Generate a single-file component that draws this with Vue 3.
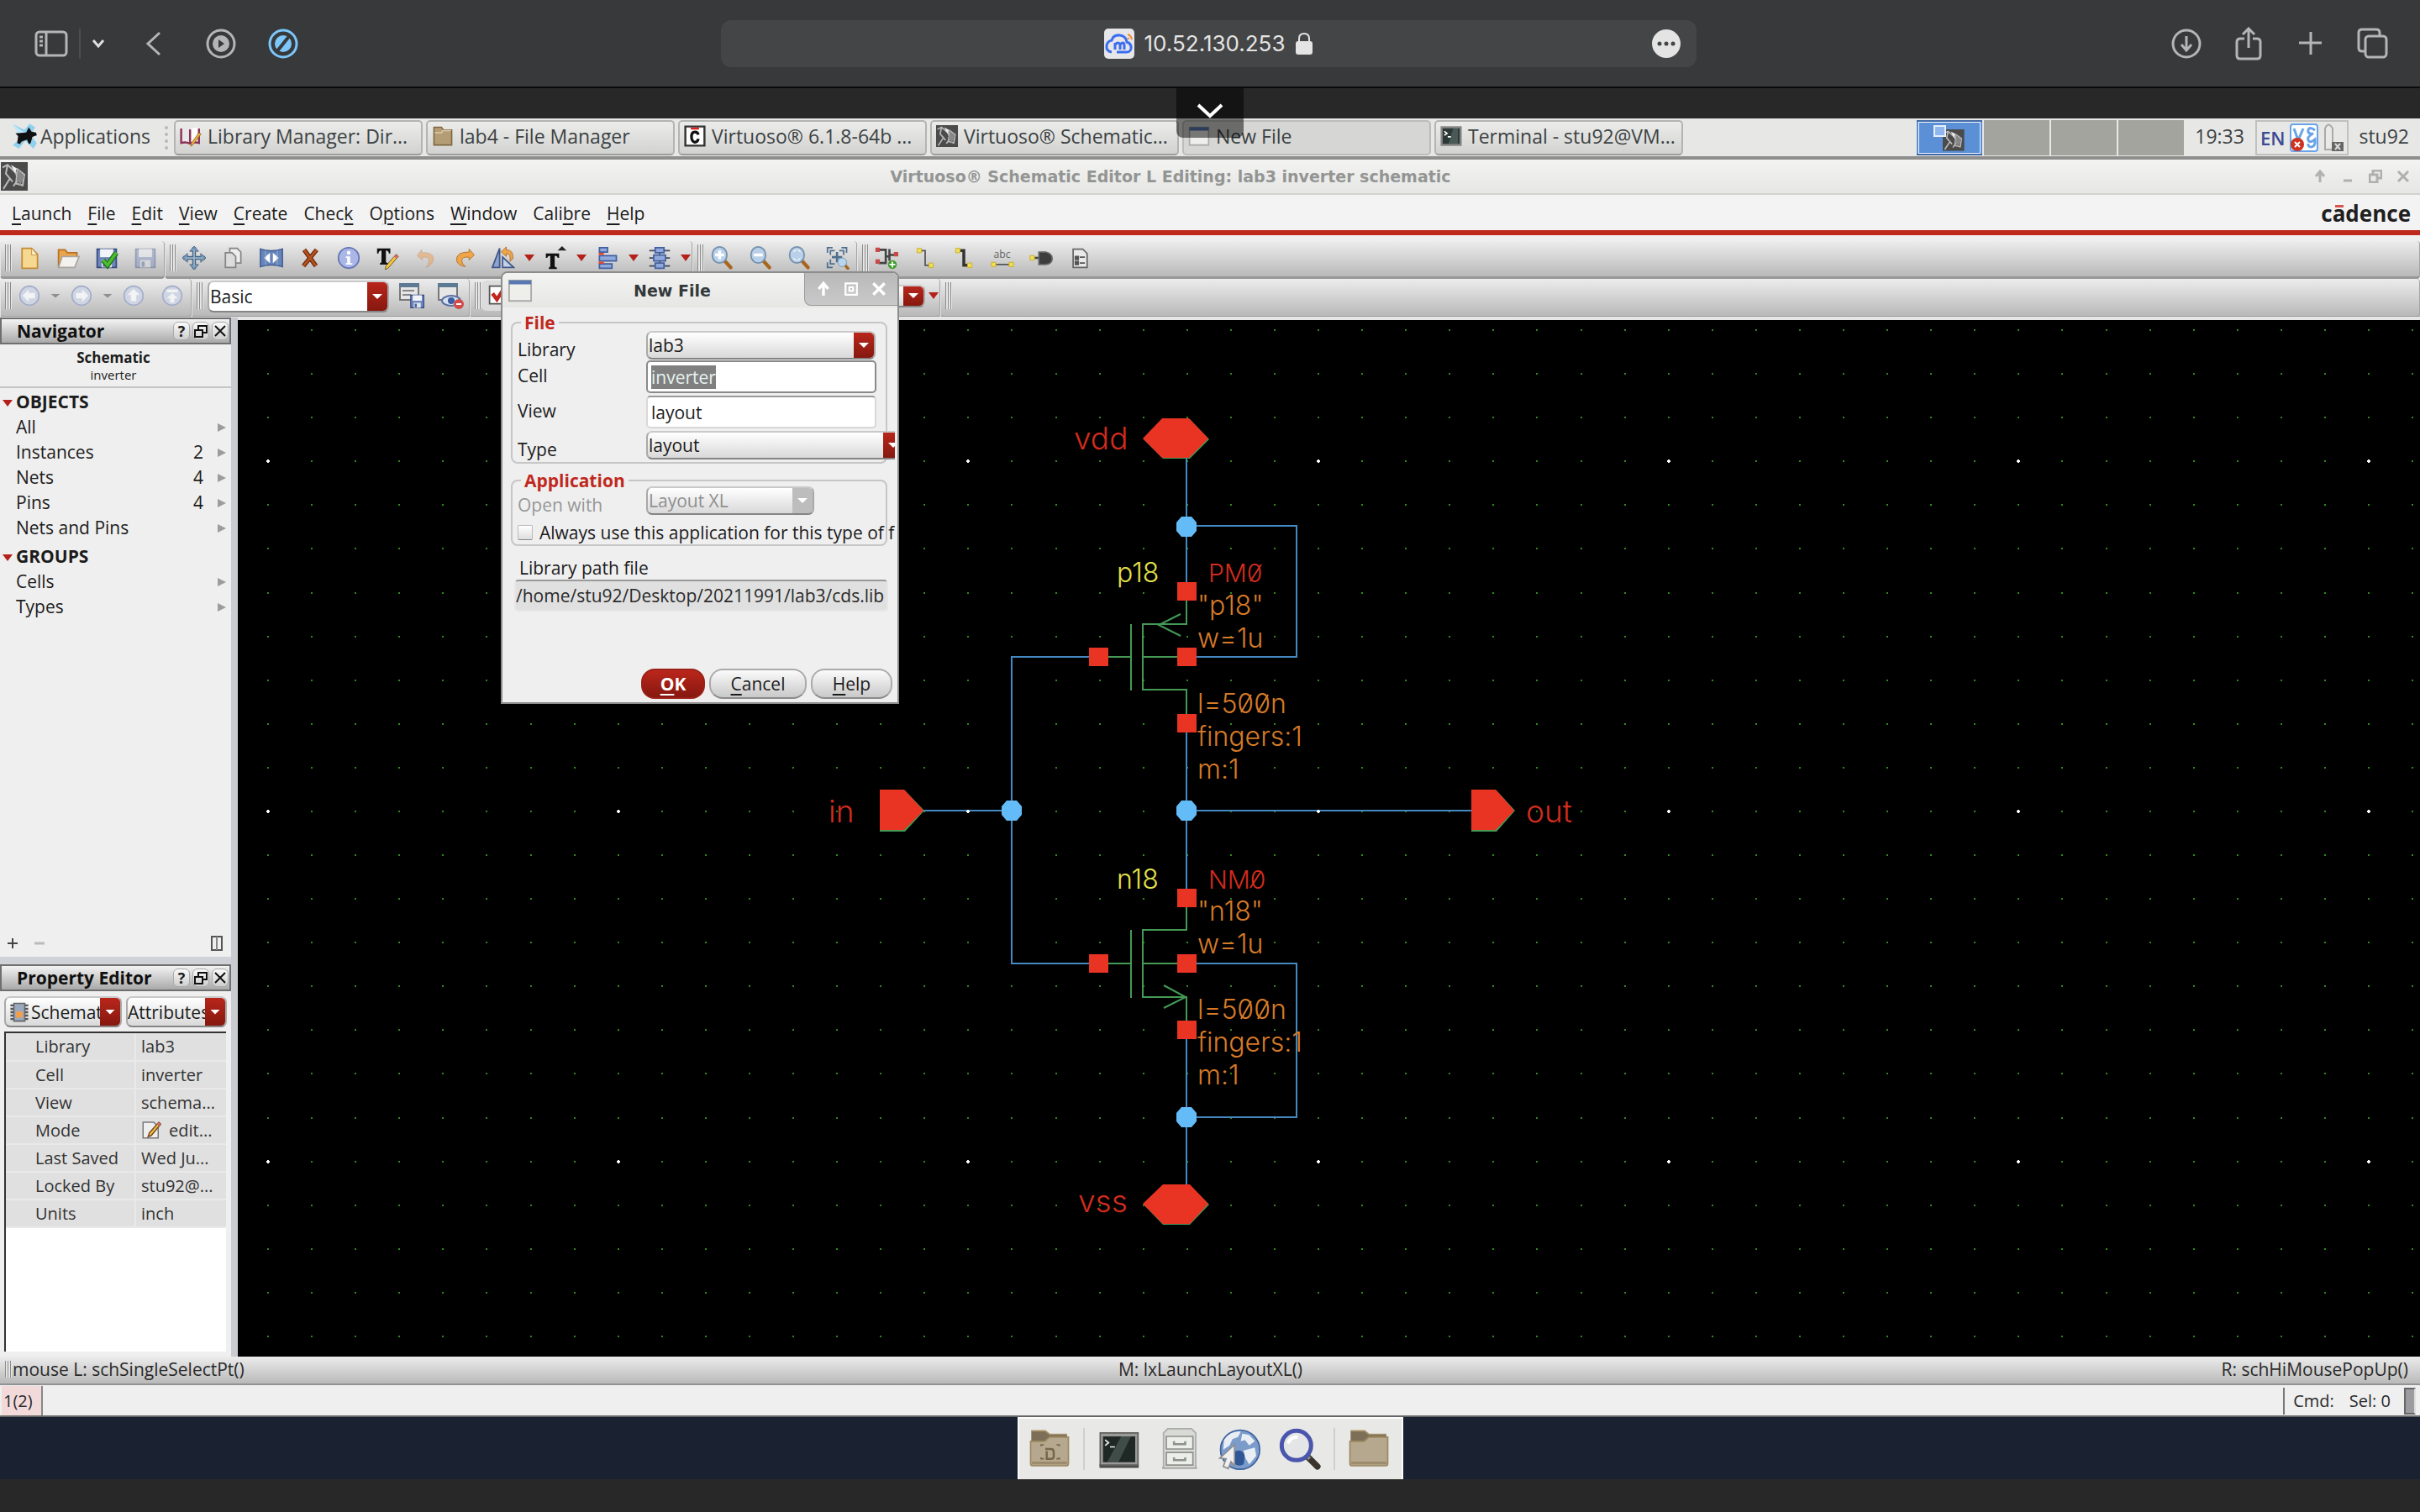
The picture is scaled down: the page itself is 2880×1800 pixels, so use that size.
<script setup>
import { onMounted, ref } from 'vue'

const cellInput = ref(null)
onMounted(() => {
  cellInput.value.focus()
  cellInput.value.select()
})

const fade = 'opacity="0.4"'
const disk = '<path d="M3 4h26v25H3z" fill="#6f86bd" stroke="#35497d" stroke-width="2"/><path d="M7 4h18v11H7z" fill="#f2f4fa"/><path d="M9 19h14v10H9z" fill="#dfe3ec"/><path d="M11 21h4v7h-4z" fill="#4a5f96"/>'
const lens = '<path d="M19 19l9 10" stroke="#a8651c" stroke-width="5" stroke-linecap="round"/><ellipse cx="13" cy="12" rx="10" ry="11" fill="#b9d0e8" stroke="#7390ad" stroke-width="2"/>'
const ring = '<circle cx="16" cy="16" r="14" fill="#cfd5e2" stroke="#a3adc8" stroke-width="2"/>'
const chip = '<path d="M0 0h32v32H0z" fill="#4b4b4b"/><path d="M2 6l6-3 10 9 2 8-5 7M8 3l-2 10 8 9M20 8l8 6-2 12-8-2zM3 30l8-12" stroke="#bbb" stroke-width="2" fill="none"/><path d="M20 8l8 8-5 10-4-6z" fill="#888"/><path d="M12 3l7 4-2 6z" fill="#eee"/>'
const windowPane = '<path d="M2 3h28v26H2z" fill="#eeeeea" stroke="#a9a9a5" stroke-width="2"/><path d="M2 3h28v5H2z" fill="#5878b4"/>'
const folder = '<path d="M4 4h20l6 5h25v20H4z" fill="#7d6f57"/><path d="M4 4h20l6 5h25" stroke="#a8926b" stroke-width="2" fill="none"/><path d="M3 19h20l7-6h27v38q0 3-3 3H6q-3 0-3-3z" fill="#b6a88e" stroke="#9c8860" stroke-width="2"/><path d="M5 48h50v4H5z" fill="#9c8b6d"/>'
const toolWindow = '<path d="M2 2h22v19H2z" fill="#e6e6e6" stroke="#777" stroke-width="2"/><path d="M1 1h24v5H1z" fill="#5c7a94"/>'

const icons = {
  book: '<path d="M2 5q7-3 13 1v21q-6-3-13-1z" fill="#e8e8e8"/><path d="M15 6q7-4 13-1v21q-7-2-13 1z" fill="#fff"/><path d="M2 5v21q7-2 13 1 6-3 13-1V5M15 6v20" fill="none" stroke="#8a3158" stroke-width="3"/><path d="M31 13L19 29l-3 2 1-5 11-15z" fill="#e9b13b" stroke="#94601c"/>',
  smallFolder: '<path d="M3 7V3h11l3 4h12v22H3z" fill="#b49c74" stroke="#7f6840" stroke-width="2"/><path d="M4 11h10l2-3h12" stroke="#dccbab" stroke-width="2" fill="none"/>',
  cad: '<path d="M2 2h28v28H2z" fill="#fff" stroke="#333" stroke-width="3"/><path d="M10 5h12" stroke="#e2231a" stroke-width="3"/><path d="M21 14q-1-4-5-4-5 0-5 7t5 8q4 0 5-5" fill="none" stroke="#111" stroke-width="4"/>',
  chip,
  window: windowPane,
  terminal: '<path d="M2 3h28v26H2z" fill="#2c3835" stroke="#888" stroke-width="3"/><path d="M6 9l4 3-4 3M11 17h5" stroke="#fff" stroke-width="2" fill="none"/><path d="M19 5l-7 22h14V5z" fill="#5d706b" opacity=".6"/>',
  mouse: '<path d="M4 3l11 12L3 26l7 4 7-9 9 9 4-6-7-9 5-9-6-4-6 7z" fill="#8fd0ee"/><path d="M2 2l14 10-6 3z" fill="#c3e8f8"/><path d="M6 13l12-1 3-6 3 5 5 1 1 3-5 2-2 7-2 1-2-5-6 2-2 3-3-1 1-8z" fill="#111"/>',
  newDoc: '<path d="M6 3h13l8 8v19H6z" fill="#f6d991" stroke="#c48a35" stroke-width="2"/><path d="M19 3v9h8z" fill="#fff3cf" stroke="#c48a35"/>',
  open: '<path d="M3 28V5h9l3 4h13v10" fill="#eaa44c" stroke="#b97223" stroke-width="2"/><path d="M8 14h23l-6 15H3z" fill="#f4f2ef" stroke="#a9a5a0" stroke-width="2"/>',
  saveCheck: disk + '<path d="M11 19l6 7L29 9" stroke="#1d7013" stroke-width="7" fill="none"/><path d="M11 19l6 7L29 9" stroke="#4dbc35" stroke-width="4" fill="none"/>',
  save: '<g ' + fade + '>' + disk + '</g>',
  move: '<path d="M16 1v30M1 16h30" stroke="#466481" stroke-width="5"/><path d="M16 0l6 7H10zM16 32l6-7H10zM0 16l7-6v12zM32 16l-7-6v12z" fill="#7998b8" stroke="#466481"/><path d="M16 5v22M5 16h22" stroke="#9ab6d0" stroke-width="2"/>',
  copy: '<path d="M12 3h10l5 5v15H12z" fill="#eee" stroke="#858585" stroke-width="2"/><path d="M6 9h9l5 5v15H6z" fill="#dcdcdc" stroke="#858585" stroke-width="2"/>',
  stretch: '<path d="M1 4q15 5 30 0v24q-15-5-30 0z" fill="#6685bb" stroke="#4a6598" stroke-width="2"/><path d="M14 9v14l-8-7zM18 9v14l8-7z" fill="#fff"/><path d="M8 6v20M24 6v20" stroke="#9db3d8"/>',
  remove: '<path d="M8 5l16 22M25 5L7 27" stroke="#69290c" stroke-width="6"/><path d="M8 5l16 22M25 5L7 27" stroke="#b8531f" stroke-width="3"/>',
  info: '<circle cx="16" cy="16" r="14" fill="#a9b6e6" stroke="#6575b4" stroke-width="2"/><circle cx="16" cy="9" r="2.500" fill="#fff"/><path d="M12 14h6v9h3v2h-9v-2h2v-7h-2z" fill="#fff"/>',
  textEdit: '<path d="M2 3h18v7h-2q0-4-4-4v15q0 2 3 2v2H6v-2q2 0 2-2V6Q4 6 4 10H2z" fill="#111"/><path d="M28 11l3 3-14 16-4 2 1-5z" fill="#f2c63f" stroke="#6b4a18"/><path d="M28 11l3 3-3 3-3-3z" fill="#d46b6b"/>',
  undo: '<path d="M10 5l-6 8 7 6v-4q9-1 9 5 0 5-4 9 10-4 10-12 0-9-16-8z" fill="#e8a86a" stroke="#c98f5e" opacity=".6"/>',
  redo: '<path d="M22 4l7 8-7 7v-4q-10-1-10 5 0 4 5 8Q5 26 5 18 5 8 22 8z" fill="#efa548" stroke="#ad6d25"/>',
  rotate: '<path d="M11 3v26H1z" fill="#8fa5d1" stroke="#3f5688" stroke-width="2"/><path d="M15 15v14h15z" fill="#c4d0e8" stroke="#3f5688" stroke-width="2"/><path d="M13 8l7-7v4q10 0 9 12l-4 4q2-11-5-11v4z" fill="#efa548" stroke="#ad6d25"/>',
  textUp: '<path d="M3 10h18v6h-2q0-3-4-3v14q0 2 3 2v2H7v-2q2 0 2-2V13q-4 0-4 3H3z" fill="#111"/><path d="M19 6l6-6 6 6z" fill="#222"/>',
  align: '<path d="M5 2h11v6H5zM5 13h23v7H5zM5 24h17v6H5z" fill="#90a9dc" stroke="#415fa0" stroke-width="2"/><path d="M4 9h7v3H4zM4 21h7v3H4z" fill="#e34b2e"/>',
  distribute: '<path d="M2 6h28M2 16h28M2 27h28M16 2v29" stroke="#3f4a58" stroke-width="2"/><path d="M10 2h12v7H10zM8 12h16v8H8zM10 23h12v7H10z" fill="#90a9dc" stroke="#415fa0" stroke-width="2"/>',
  zoomIn: lens + '<path d="M13 6v12M7 12h12" stroke="#fff" stroke-width="4"/>',
  zoomOut: lens + '<path d="M7 12h12" stroke="#fff" stroke-width="4"/>',
  zoomFit: lens + '<path d="M7 9l3-4h3zM19 9l-3-4h-3zM7 15l3 4h3zM19 15l-3 4h-3z" fill="#fff"/>',
  zoomArea: '<path d="M2 9V2h7M21 2h7v7M2 22v7h7M6 12V6h6M18 6h6v6M6 18v6h6" fill="none" stroke="#4f6f8f" stroke-width="2"/><path d="M15 8v14M8 15h14" stroke="#4f6f8f" stroke-width="3"/><path d="M26 26l5 6" stroke="#a8651c" stroke-width="4"/><circle cx="22" cy="22" r="6" fill="#b7d5ee" stroke="#7390ad"/>',
  instance: '<path d="M5 5h10v18H5M15 14h5M20 4v16M20 12h10" fill="none" stroke="#444" stroke-width="3"/><path d="M1 2h6v6H1zM1 18h6v6H1zM26 8h6v6h-6z" fill="#c84848"/><circle cx="24" cy="25" r="6" fill="#3d9b2a"/><path d="M24 21v8M20 25h8" stroke="#fff" stroke-width="2"/>',
  wire: '<path d="M8 6h8v20h8" fill="none" stroke="#555" stroke-width="2"/><path d="M5 3h6v6H5zM21 23h6v6h-6z" fill="#f0de57" stroke="#c8ad28"/>',
  wideWire: '<path d="M8 6h8v20h8" fill="none" stroke="#333" stroke-width="4"/><path d="M5 3h6v6H5zM21 23h6v6h-6z" fill="#f0de57" stroke="#c8ad28"/>',
  wireName: '<path d="M4 25h24" stroke="#555" stroke-width="2"/><path d="M1 22h6v6H1zM25 22h6v6h-6z" fill="#f0de57" stroke="#c8ad28"/>',
  pin: '<path d="M4 16h10" stroke="#444" stroke-width="3"/><path d="M13 8h9q9 2 9 9t-9 8h-9z" fill="#3d3d3d" stroke="#666" stroke-width="2"/><path d="M1 13h6v6H1z" fill="#f0de57" stroke="#c8ad28"/>',
  sheet: '<path d="M7 4h13l6 6v19H7z" fill="#e9e9e9" stroke="#666" stroke-width="2"/><path d="M10 14h4v4h-4zM16 15h7M10 21h4v4h-4zM16 23h7" stroke="#555" stroke-width="2" fill="#555"/>',
  left: ring + '<path d="M6 16l9-9v5h9v8h-9v5z" fill="#f2f3f5"/>',
  right: ring + '<path d="M26 16l-9-9v5H8v8h9v5z" fill="#f2f3f5"/>',
  up: ring + '<path d="M16 6l9 9h-5v9h-8v-9H7z" fill="#f2f3f5"/>',
  top: ring + '<path d="M8 7h16v4H8zM16 12l8 8h-5v6h-6v-6H8z" fill="#f2f3f5"/>',
  viewSave: toolWindow + '<path d="M5 10h14M5 15h10" stroke="#888" stroke-width="2"/><g transform="translate(13 13) scale(.6)">' + disk + '</g>',
  viewHide: toolWindow + '<ellipse cx="17" cy="22" rx="11" ry="6" fill="#d5dff0" stroke="#596f9e" stroke-width="2"/><circle cx="17" cy="22" r="4" fill="#3c5da0"/><circle cx="26" cy="26" r="6" fill="#d14b4b"/><path d="M23 26h6" stroke="#fff" stroke-width="2"/>',
  check: '<path d="M3 3h26v24H3z" fill="#fff" stroke="#555" stroke-width="2"/><path d="M7 13l6 8L24 4" stroke="#c3231a" stroke-width="5" fill="none"/>',
  part: '<path d="M3 6h5M3 11h5M3 16h5M3 21h5M3 26h5M24 6h5M24 11h5M24 16h5M24 21h5M24 26h5" stroke="#555" stroke-width="3"/><path d="M8 3h16v26H8z" fill="#9ba9bf" stroke="#666" stroke-width="2"/><path d="M11 15h10v9H11z" fill="#f0a04a"/>',
  edit: '<path d="M3 4h17l7 7v18H3z" fill="#eee" stroke="#777" stroke-width="2"/><path d="M28 4l3 3-15 18-5 2 2-6z" fill="#f2c63f" stroke="#7c4b24" stroke-width="2"/><path d="M28 4l3 3-3 3-3-3z" fill="#d46b6b"/>',
}

const dockIcons = {
  home: folder + '<path d="M24 30h8q4 0 4 5v6q0 3-4 3h-6V33" stroke="#75664b" stroke-width="3" fill="none"/><path d="M18 26v-2h4M40 24h4v2M18 42v2h4M40 44h4v-2" stroke="#75664b" stroke-width="2" fill="none"/>',
  terminal: '<path d="M3 52h56v5H3z" fill="#4c4c4c"/><path d="M4 7h54v46H4z" fill="#9a9a98" stroke="#60605e" stroke-width="2"/><path d="M8 12h46v37H8z" fill="#202826"/><path d="M34 12h14L30 49H14z" fill="#55645f" opacity=".6"/><path d="M11 17l5 4-5 4M18 27h7" stroke="#eee" stroke-width="2" fill="none"/>',
  cabinet: '<path d="M6 57h50" stroke="#aaa" stroke-width="3"/><path d="M14 1h34l6 6v50H8V7z" fill="#d8dad5" stroke="#aaaca8" stroke-width="2"/><path d="M12 12h38v18H12zM12 35h38v18H12z" fill="#eceee9" stroke="#8e908c" stroke-width="2"/><path d="M23 19v4h16v-4M23 42v4h16v-4" stroke="#8e908c" stroke-width="3" fill="none"/>',
  globe: '<circle cx="31" cy="31" r="28" fill="#7b9ccb" stroke="#3d62a0" stroke-width="2"/><path d="M22 34q12-6 16 6l-2 12q-8 4-14-2z" fill="#2f5795"/><path d="M8 17q9-13 24-12l-4 8-8 3-4 9-9 6zM34 8l10 2 8 9-8 6-6-8-6 2zM36 32l16-4 2 12-10 12-6-10z" fill="#e9eef4"/><path d="M23 24L2 43l9 1-4 11 7 3 4-10 5 6z" fill="#efefef" stroke="#8d8d8d" stroke-width="2"/>',
  search: '<path d="M40 40l15 15" stroke="#3a342d" stroke-width="9" stroke-linecap="round"/><path d="M37 37l7 7" stroke="#888" stroke-width="5"/><circle cx="25" cy="25" r="21" fill="#e3e5e6" stroke="#4a55ad" stroke-width="6"/><path d="M13 22q4-10 14-9" stroke="#fff" stroke-width="5" fill="none"/>',
  folder,
}

const tasks = [
  { icon: 'book', text: 'Library Manager: Dir...' },
  { icon: 'smallFolder', text: 'lab4 - File Manager' },
  { icon: 'cad', text: 'Virtuoso® 6.1.8-64b ...' },
  { icon: 'chip', text: 'Virtuoso® Schematic...' },
  { icon: 'window', text: 'New File', active: true },
  { icon: 'terminal', text: 'Terminal - stu92@VM...' },
]
const menus = [
  ['', 'L', 'aunch'], ['', 'F', 'ile'], ['', 'E', 'dit'], ['', 'V', 'iew'], ['', 'C', 'reate'],
  ['Chec', 'k', ''], ['O', 'p', 'tions'], ['', 'W', 'indow'], ['Cali', 'b', 're'], ['', 'H', 'elp'],
]
const tools = [
  ['newDoc', 'open', 'saveCheck', 'save'],
  ['move', 'copy', 'stretch', 'remove', 'info', 'textEdit', 'undo', 'redo', 'rotate+', 'textUp+', 'align+', 'distribute+'],
  ['zoomIn', 'zoomOut', 'zoomFit', 'zoomArea'],
  ['instance', 'wire', 'wideWire', 'wireName', 'pin', 'sheet'],
].map(g => g.map(n => ({ name: n.replace('+', ''), drop: n.endsWith('+') })))
const navTools = [{ name: 'left', drop: true }, { name: 'right', drop: true }, { name: 'up' }, { name: 'top' }]
const sections = [
  { title: 'OBJECTS', rows: [['All', ''], ['Instances', '2'], ['Nets', '4'], ['Pins', '4'], ['Nets and Pins', '']] },
  { title: 'GROUPS', rows: [['Cells', ''], ['Types', '']] },
]
const properties = [
  ['Library', 'lab3'], ['Cell', 'inverter'], ['View', 'schema...'], ['Mode', 'edit...'],
  ['Last Saved', 'Wed Ju...'], ['Locked By', 'stu92@...'], ['Units', 'inch'],
]

const dots = []
const crosses = []
for (let c = 0; c < 50; c++) {
  for (let r = 0; r < 24; r++) {
    const x = Math.round(318 + (c * 1250) / 24)
    const y = Math.round(392 + (r * 1250) / 24)
    if (c % 8 === 0 && r % 8 === 3) crosses.push([x, y])
    else dots.push([x, y])
  }
}
const dotPath = dots.map(([x, y]) => `M${x} ${y}h2v2h-2z`).join('')
const crossPath = crosses.map(([x, y]) => `M${x - 1} ${y}h4v2h-4zM${x} ${y - 1}h2v4h-2z`).join('')
const pads = [[1412, 704], [1412, 782], [1412, 861], [1307, 782], [1412, 1069], [1412, 1147], [1412, 1226], [1307, 1147]]
const nodes = [[1412, 627], [1204, 965], [1412, 965], [1412, 1330]]
const octagon = ([x, y]) => `M${x - 6} ${y - 12}h12l6 7v10l-6 7h-12l-6-7v-10z`
const devices = [
  { y: 693, name: 'p18', inst: 'PM0', lines: [['"p18"', 732], ['w=1u', 771], ['l=500n', 849], ['fingers:1', 888], ['m:1', 927]] },
  { y: 1058, name: 'n18', inst: 'NM0', lines: [['"n18"', 1096], ['w=1u', 1135], ['l=500n', 1213], ['fingers:1', 1252], ['m:1', 1291]] },
]
const pinNames = [['vdd', 1278, 535], ['in', 986, 979], ['out', 1816, 979], ['vss', 1283, 1443]]
</script>

<template>
  <div class="screen">
    <header class="browser">
      <div class="left">
        <button aria-label="Sidebar"><svg width="40" height="32" viewBox="0 0 40 32"><rect x="2" y="2" width="36" height="28" rx="4" /><path d="M14 2v28M6 8h4M6 13h4M6 18h4" /></svg></button>
        <span class="rule"></span>
        <button aria-label="Tab groups"><svg class="bright" width="16" height="12" viewBox="0 0 16 12"><path d="M2 2l6 7 6-7" /></svg></button>
        <button class="back" aria-label="Back"><svg width="20" height="32" viewBox="0 0 20 32"><path d="M17 3L3 16l14 13" /></svg></button>
        <button class="media" aria-label="Play"><svg width="36" height="36" viewBox="0 0 36 36"><circle cx="18" cy="18" r="16" /><circle cx="18" cy="18" r="10" fill="#b4b5b6" stroke="none" /><path d="M15 13l7 5-7 5z" fill="#38393b" stroke="none" /></svg></button>
        <button class="block" aria-label="Blocker"><svg class="blue" width="36" height="36" viewBox="0 0 36 36"><circle cx="18" cy="18" r="16" /><circle cx="18" cy="18" r="10" fill="#7cc8fb" stroke="none" /><path d="M10 28L26 8" stroke="#38393b" stroke-width="4" /></svg></button>
      </div>
      <div class="address">
        <svg width="36" height="36" viewBox="0 0 36 36"><rect width="36" height="36" rx="5" fill="#e6e6e8" /><path d="M9 28q-7-1-6-8 1-5 6-6 2-7 10-6 7 1 8 8 6 2 5 8-1 4-5 4H15" fill="none" stroke="#3b6df0" stroke-width="3" /><path d="M13 25v-8M13 19q4-4 6 0v6M19 19q4-4 5 0v6" fill="none" stroke="#3b6df0" stroke-width="3" /><path d="M28 11q1 1 1 2M28 7q4 1 5 6" stroke="#f08a3c" stroke-width="2" fill="none" /></svg>
        <span>10.52.130.253</span>
        <svg width="22" height="28" viewBox="0 0 22 28"><rect x="1" y="11" width="20" height="16" rx="3" fill="#e4e4e4" /><path d="M5 12V8q0-6 6-6t6 6v4" fill="none" stroke="#e4e4e4" stroke-width="2" /></svg>
        <button class="more" aria-label="Page menu"><svg width="34" height="34" viewBox="0 0 34 34"><circle cx="17" cy="17" r="17" fill="#e4e4e4" /><g fill="#444546"><circle cx="9" cy="17" r="2.500" /><circle cx="17" cy="17" r="2.500" /><circle cx="25" cy="17" r="2.500" /></g></svg></button>
      </div>
      <div class="right">
        <button aria-label="Downloads"><svg width="38" height="38" viewBox="0 0 38 38"><circle cx="19" cy="19" r="16" /><path d="M19 10v16M13 20l6 7 6-7" /></svg></button>
        <button aria-label="Share"><svg width="38" height="40" viewBox="0 0 38 40"><path d="M14 14H9q-4 0-4 4v16q0 4 4 4h20q4 0 4-4V18q0-4-4-4h-5M19 25V3M12 9l7-7 7 7" /></svg></button>
        <button aria-label="New tab"><svg width="38" height="38" viewBox="0 0 38 38"><path d="M19 5v27M5 18h27" /></svg></button>
        <button aria-label="Tabs"><svg width="38" height="38" viewBox="0 0 38 38"><rect x="10" y="10" width="25" height="25" rx="4" /><path d="M10 28H6q-4 0-4-4V6q0-4 4-4h17q4 0 4 4v4" /></svg></button>
      </div>
    </header>
    <div class="gap"></div>
    <button class="pulldown" aria-label="Show toolbar"><svg width="32" height="18" viewBox="0 0 32 18"><path d="M2 2l14 13L30 2" fill="none" stroke="#fff" stroke-width="4" /></svg></button>

    <nav class="panel">
      <button class="apps"><svg width="34" height="34" viewBox="0 0 32 32" v-html="icons.mouse"></svg>Applications</button>
      <span class="dotted"></span>
      <button v-for="t in tasks" :key="t.text" class="task" :class="{ active: t.active }">
        <svg width="26" height="26" viewBox="0 0 32 32" v-html="icons[t.icon]"></svg>{{ t.text }}
      </button>
      <div class="pager">
        <button class="current" aria-label="Workspace 1"><svg width="50" height="36" viewBox="0 0 50 36"><g transform="translate(17 8) scale(.8)" v-html="icons.chip"></g><rect x="7" y="4" width="13" height="12" fill="#8fb7ee" stroke="#e7f0fc" stroke-width="2" /></svg></button>
        <button aria-label="Workspace 2"></button><button aria-label="Workspace 3"></button><button aria-label="Workspace 4"></button>
      </div>
      <span class="clock">19:33</span>
      <div class="tray">
        <b>EN</b>
        <svg width="34" height="34" viewBox="0 0 34 34"><rect x="1" y="1" width="32" height="32" rx="3" fill="#fff" stroke="#69a4e8" stroke-width="2" /><path d="M5 6l5 14 6-14M30 8q-7-5-8 0t6 4q-8 4-6 8t8-1q1 8-4 9-5 0-4-4" fill="none" stroke="#69a4e8" stroke-width="3" /><circle cx="9" cy="25" r="8" fill="#cc3322" /><path d="M6 22l6 6M12 22l-6 6" stroke="#fff" stroke-width="2" /></svg>
        <svg width="24" height="34" viewBox="0 0 24 34"><path d="M2 6q4-9 9 0v25H2z" fill="#e9e9e6" stroke="#aaa" stroke-width="2" /><path d="M10 22h14v11H10z" fill="#666" /><path d="M14 24l6 7M20 24l-6 7" stroke="#ddd" stroke-width="2" /></svg>
      </div>
      <span class="user">stu92</span>
    </nav>

    <div class="titlebar">
      <svg class="appicon" width="32" height="34" viewBox="0 0 32 32" preserveAspectRatio="none" v-html="icons.chip"></svg>
      <h1>Virtuoso® Schematic Editor L Editing: lab3 inverter schematic</h1>
      <div class="winbtns">
        <button aria-label="Shade"><svg width="16" height="16" viewBox="0 0 16 16"><path d="M8 2v13M3 8l5-6 5 6" /></svg></button>
        <button aria-label="Minimize"><svg width="16" height="16" viewBox="0 0 16 16"><path d="M3 13h10" /></svg></button>
        <button aria-label="Restore"><svg width="16" height="16" viewBox="0 0 16 16"><path d="M1 6h9v9H1zM5 6V1h10v9h-5" /></svg></button>
        <button aria-label="Close"><svg width="16" height="16" viewBox="0 0 16 16"><path d="M2 2l12 12M14 2L2 14" /></svg></button>
      </div>
    </div>

    <nav class="menubar">
      <button v-for="m in menus" :key="m.join('')">{{ m[0] }}<u>{{ m[1] }}</u>{{ m[2] }}</button>
      <span class="brand">c<span class="macron">a</span>dence</span>
    </nav>

    <div class="toolbar first">
      <div v-for="(g, i) in tools" :key="i" class="group">
        <i class="grip"></i>
        <template v-for="t in g" :key="t.name">
          <button class="tool" :aria-label="t.name"><svg width="28" height="28" viewBox="0 0 32 32"><g v-html="icons[t.name]"></g><text v-if="t.name === 'wireName'" x="4" y="16" class="abc">abc</text></svg></button>
          <i v-if="t.drop" class="drop"></i>
        </template>
      </div>
    </div>
    <div class="toolbar">
      <div class="group">
        <i class="grip"></i>
        <template v-for="t in navTools" :key="t.name">
          <button class="tool" :aria-label="t.name"><svg width="26" height="26" viewBox="0 0 32 32" v-html="icons[t.name]"></svg></button>
          <i v-if="t.drop" class="drop grey"></i>
        </template>
      </div>
      <div class="group">
        <i class="grip"></i>
        <div class="combo workspace"><select aria-label="Workspace"><option>Basic</option></select></div>
        <button class="tool" aria-label="Save workspace"><svg width="32" height="32" viewBox="0 0 32 32" v-html="icons.viewSave"></svg></button>
        <button class="tool" aria-label="Hide assistants"><svg width="32" height="32" viewBox="0 0 32 32" v-html="icons.viewHide"></svg></button>
      </div>
      <div class="group filter">
        <i class="grip"></i>
        <button class="tool pressed" aria-label="Selection filter"><svg width="28" height="28" viewBox="0 0 32 32" v-html="icons.check"></svg></button>
        <div class="combo search"><select aria-label="Search"><option></option></select></div>
        <i class="drop"></i>
      </div>
      <div class="group"><i class="grip"></i></div>
    </div>

    <main class="work">
      <aside>
        <section class="navigator">
          <header class="dockhead"><h2>Navigator</h2>
            <button aria-label="Help">?</button>
            <button aria-label="Float"><svg width="16" height="16" viewBox="0 0 16 16"><path d="M1 7h9v8H1zM5 7V2h10v8h-5" /></svg></button>
            <button aria-label="Close"><svg width="16" height="16" viewBox="0 0 16 16"><path d="M2 2l12 12M14 2L2 14" /></svg></button>
          </header>
          <div class="cellview"><b>Schematic</b><span>inverter</span></div>
          <div v-for="s in sections" :key="s.title" class="tree">
            <h3>{{ s.title }}</h3>
            <ul><li v-for="r in s.rows" :key="r[0]"><span>{{ r[0] }}</span><span>{{ r[1] }}</span></li></ul>
          </div>
          <footer>
            <button aria-label="Add"><svg width="14" height="14" viewBox="0 0 14 14"><path d="M7 1v12M1 7h12" stroke="#444" stroke-width="2" /></svg></button>
            <button aria-label="Remove"><svg width="14" height="14" viewBox="0 0 14 14"><path d="M1 7h12" stroke="#bbb" stroke-width="3" /></svg></button>
            <button class="cols" aria-label="Columns"><svg width="16" height="20" viewBox="0 0 16 20"><path d="M2 2h12v16H2z" fill="none" stroke="#555" stroke-width="2" /><path d="M8 2v16" stroke="#888" stroke-width="2" /></svg></button>
          </footer>
        </section>
        <section class="property">
          <header class="dockhead"><h2>Property Editor</h2>
            <button aria-label="Help">?</button>
            <button aria-label="Float"><svg width="16" height="16" viewBox="0 0 16 16"><path d="M1 7h9v8H1zM5 7V2h10v8h-5" /></svg></button>
            <button aria-label="Close"><svg width="16" height="16" viewBox="0 0 16 16"><path d="M2 2l12 12M14 2L2 14" /></svg></button>
          </header>
          <div class="pickers">
            <div class="combo schem"><svg width="26" height="26" viewBox="0 0 32 32" v-html="icons.part"></svg><select aria-label="Object"><option>Schematic</option></select></div>
            <div class="combo attrs"><select aria-label="Category"><option>Attributes</option></select></div>
          </div>
          <div class="sheet">
            <table>
              <tbody>
                <tr v-for="p in properties" :key="p[0]">
                  <th scope="row">{{ p[0] }}</th>
                  <td><svg v-if="p[0] === 'Mode'" width="24" height="24" viewBox="0 0 32 32" v-html="icons.edit"></svg>{{ p[1] }}</td>
                </tr>
              </tbody>
            </table>
          </div>
        </section>
      </aside>

      <div class="canvas">
        <svg width="100%" height="100%">
          <g transform="translate(-283 -381)">
            <path :d="dotPath" fill="#2f8a1c" />
            <g fill="none" stroke="#4489c2" stroke-width="2">
              <path d="M1412 546V704M1412 861V1069M1412 1226V1410M1412 626H1543V782H1412M1307 782H1204V1147H1307M1099 965H1204M1412 965H1751M1412 1147H1543V1330H1412" />
            </g>
            <path :d="crossPath" fill="#fff" />
            <g fill="none" stroke="#449a55" stroke-width="2">
              <path d="M1307 782H1346M1346 743V822M1412 704V743H1360V821H1412V861M1360 782H1412M1405 731L1379 744L1405 757" />
              <path d="M1307 1147H1346M1346 1107V1188M1412 1069V1107H1360V1187H1412V1226M1360 1147H1412M1385 1173L1411 1187L1385 1200" />
            </g>
            <rect v-for="p in pads" :key="p.join()" :x="p[0] - 11" :y="p[1] - 11" width="23" height="22" fill="#e93323" />
            <path v-for="n in nodes" :key="n.join()" :d="octagon(n)" fill="#63bbf8" />
            <g fill="#449a55">
              <path d="M1361 523L1384 499H1416L1439 523L1416 546H1384zM1361 1434L1384 1411H1416L1439 1434L1416 1458H1384zM1047 941H1077L1100 965L1077 990H1047zM1751 941H1781L1803 965L1781 990H1751z" />
            </g>
            <g fill="#e93323">
              <path d="M1360 522L1383 498H1415L1438 522L1415 545H1383zM1360 1433L1384 1410H1416L1438 1433L1416 1457H1384zM1047 940H1076L1099 965L1076 988H1047zM1751 940H1780L1802 965L1780 988H1751z" />
            </g>
            <g class="label">
              <text v-for="p in pinNames" :key="p[0]" class="pinname" :x="p[1]" :y="p[2]">{{ p[0] }}</text>
              <template v-for="d in devices" :key="d.name">
                <text class="master" x="1329" :y="d.y">{{ d.name }}</text>
                <text class="inst" x="1438" :y="d.y">{{ d.inst }}</text>
                <text v-for="l in d.lines" :key="l[0]" class="param" x="1425" :y="l[1]">{{ l[0] }}</text>
                <path class="slash inst" :d="`M1488 ${d.y - 1}l13-20`" />
                <path class="slash param" :d="`M1477 ${d.y + 155}l12-21M1497 ${d.y + 155}l12-21`" />
              </template>
            </g>
          </g>
        </svg>
      </div>
    </main>

    <div class="mousebar">
      <i class="grip"></i><span>mouse L: schSingleSelectPt()</span><span>M: lxLaunchLayoutXL()</span><span>R: schHiMousePopUp()</span>
    </div>
    <div class="status"><span class="count">1(2)</span><span class="cmd">Cmd:</span><span>Sel: 0</span><i></i></div>

    <div class="desktop">
      <div class="dock">
        <button aria-label="Home"><svg width="50" height="50" viewBox="0 0 60 60" v-html="dockIcons.home"></svg></button>
        <i></i>
        <button aria-label="Terminal"><svg width="50" height="50" viewBox="0 0 60 60" v-html="dockIcons.terminal"></svg></button>
        <button aria-label="Files"><svg width="50" height="50" viewBox="0 0 60 60" v-html="dockIcons.cabinet"></svg></button>
        <button aria-label="Web"><svg width="50" height="50" viewBox="0 0 60 60" v-html="dockIcons.globe"></svg></button>
        <button aria-label="Search"><svg width="50" height="50" viewBox="0 0 60 60" v-html="dockIcons.search"></svg></button>
        <i></i>
        <button aria-label="Folder"><svg width="50" height="50" viewBox="0 0 60 60" v-html="dockIcons.folder"></svg></button>
      </div>
    </div>
    <div class="bottom"></div>

    <form class="dialog" @submit.prevent>
      <header>
        <svg width="30" height="30" viewBox="0 0 32 32" v-html="icons.window"></svg>
        <h2>New File</h2>
        <div class="ctl">
          <button type="button" aria-label="Shade"><svg width="18" height="18" viewBox="0 0 16 16"><path d="M8 2v13M3 8l5-6 5 6" /></svg></button>
          <button type="button" aria-label="Maximize"><svg width="18" height="18" viewBox="0 0 16 16"><path class="thin" d="M2 2h12v12H2zM6 6h4v4H6z" /></svg></button>
          <button type="button" aria-label="Close"><svg width="18" height="18" viewBox="0 0 16 16"><path d="M2 2l12 12M14 2L2 14" /></svg></button>
        </div>
      </header>
      <div class="body">
        <fieldset class="file">
          <legend>File</legend>
          <div class="row"><label class="low" for="lib">Library</label><div class="combo lib"><select id="lib"><option>lab3</option></select></div></div>
          <div class="row"><label for="cell">Cell</label><input id="cell" ref="cellInput" class="focused" type="text" value="inverter"></div>
          <div class="row"><label for="view">View</label><input id="view" type="text" value="layout"></div>
          <div class="row"><label class="low" for="type">Type</label><div class="combo type"><select id="type"><option>layout</option></select></div></div>
        </fieldset>
        <fieldset>
          <legend>Application</legend>
          <div class="row off"><label class="low" for="app">Open with</label><div class="combo app"><select id="app" disabled><option>Layout XL</option></select></div></div>
          <label class="always"><input type="checkbox">Always use this application for this type of f</label>
        </fieldset>
        <label class="pathlabel" for="path">Library path file</label>
        <input id="path" class="path" type="text" readonly value="/home/stu92/Desktop/20211991/lab3/cds.lib">
        <div class="actions">
          <button class="ok"><u>O</u>K</button>
          <button type="button" class="cancel"><u>C</u>ancel</button>
          <button type="button" class="help"><u>H</u>elp</button>
        </div>
      </div>
    </form>
  </div>
</template>

<style>
body { margin: 0; background: #282828; }
</style>

<style scoped>
* { box-sizing: border-box; }
.screen {
  position: relative; display: flex; flex-direction: column; min-height: 100vh; overflow: hidden;
  font: 21px/28px "Open Sans", "Noto Sans", sans-serif; color: #1c1c1c; background: #efefef;
}
button { font: inherit; color: inherit; background: none; border: 0; padding: 0; margin: 0; display: flex; align-items: center; justify-content: center; flex: none; white-space: pre; }
h1, h2, h3, ul { margin: 0; padding: 0; list-style: none; }
svg { flex: none; display: block; }
u { text-decoration-thickness: 2px; text-underline-offset: 4px; }

.browser { height: 105px; background: #38393b; border-bottom: 2px solid #0a0a0a; display: grid; grid-template-columns: 1fr 1161px 1fr; align-items: center; padding-right: 3px; }
.browser svg { fill: none; stroke: #b4b5b6; stroke-width: 3px; }
.browser .left { display: flex; align-items: center; padding-left: 41px; }
.browser .rule { width: 2px; height: 36px; background: #4c4d4f; margin: 0 13px; }
.browser .bright { stroke: #e0e0e0; }
.browser .back { margin-left: 48px; }
.browser .media { margin-left: 52px; }
.browser .block { margin-left: 38px; }
.browser .blue { stroke: #7cc8fb; }
.address { position: relative; height: 56px; background: #444546; border-radius: 12px; display: flex; align-items: center; justify-content: center; gap: 12px; color: #e4e4e4; font: 26px/32px Inter, sans-serif; }
.address svg { stroke: none; }
.address .more { position: absolute; right: 19px; top: 11px; }
.browser .right { display: flex; justify-content: flex-end; gap: 36px; padding-right: 34px; }
.gap { height: 36px; background: #282828; }
.pulldown { position: absolute; z-index: 3; top: 105px; left: calc(50% - 40px); width: 80px; height: 59px; padding-bottom: 6px; background: rgba(0, 0, 0, 0.5); border-radius: 0 0 8px 8px; }

.panel { height: 49px; display: flex; align-items: center; background: #e7e7e5; border-bottom: 4px solid #8e8e8c; padding: 0 13px 0 12px; color: #3c4244; font-size: 23px; }
.apps { gap: 2px; width: 166px; padding-bottom: 4px; justify-content: flex-start; }
.dotted { width: 4px; height: 28px; margin: 0 7px 0 18px; border-left: 4px dotted #b9b9b7; }
.task { width: 296px; height: 42px; margin-right: 4px; padding: 0 0 4px 5px; gap: 7px; justify-content: flex-start; border: 2px solid #b4b4b2; border-bottom-color: #9b9b99; border-radius: 5px; background: linear-gradient(#ececea, #d2d2d0); }
.task.active { background: #d6d6d4; border-color: #bcbcba; }
.pager { display: flex; gap: 2px; margin-left: auto; }
.pager button { width: 78px; height: 42px; background: #a4a49f; }
.pager .current { background: #5b8fd6; border: solid #416aa5; border-width: 2px 0; outline: 1px solid #f2f6fc; outline-offset: -3px; }
.clock { margin: 0 13px; padding-bottom: 4px; }
.tray { height: 42px; border: 2px solid #c0c0be; display: flex; align-items: center; gap: 6px; padding: 0 4px; color: #3b4b94; }
.tray b { font-weight: 600; font-size: 22px; }
.user { margin-left: 12px; padding-bottom: 4px; }

.titlebar { height: 42px; display: flex; align-items: center; background: linear-gradient(#f3f3f1, #e6e6e4); border-bottom: 2px solid #d2d2d0; }
.titlebar .appicon { margin-left: 1px; }
.titlebar h1 { flex: 1; text-align: center; font: bold 19px/28px "DejaVu Sans", sans-serif; color: #939594; }
.winbtns { display: flex; gap: 17px; width: 127px; }
.winbtns svg { fill: none; stroke: #b0b0ae; stroke-width: 3px; }

.menubar { height: 48px; display: flex; align-items: center; gap: 19px; padding: 4px 11px 2px 14px; background: #f3f3f3; border-bottom: 6px solid #bf281c; }
.menubar button { line-height: 28px; }
.brand { margin-left: auto; font: bold 26px/32px "Open Sans", sans-serif; color: #1f1f1f; }
.macron { background: linear-gradient(#d9534f, #d9534f) 50% 8px / 10px 3px no-repeat; }

.toolbar { height: 47px; display: flex; background: #efefef; }
.toolbar.first { height: 52px; padding-top: 7px; }
.group { display: flex; align-items: center; gap: 4px; padding: 0 1px 4px 5px; background: linear-gradient(#ececec, #b9b9b9); border-bottom: 3px solid #989898; border-left: 1px solid #e4e4e4; border-right: 1px solid #a4a4a4; border-radius: 4px; }
.first .group { padding-bottom: 2px; }
.group:last-child { flex: 1; }
.grip { flex: none; width: 8px; height: 32px; margin-right: -4px; background: repeating-linear-gradient(90deg, #8b8b8b 0 1px, #e6e6e6 1px 3px); }
.tool { width: 42px; height: 36px; }
.abc { font: 14px "Open Sans", sans-serif; fill: #666; }
.drop { width: 12px; height: 8px; background: #b4211a; clip-path: polygon(0 0, 100% 0, 50% 100%); }
.drop.grey { background: #8f8f8f; height: 5px; }
.filter { width: 560px; }
.pressed { background: #dcdcdc; border-radius: 6px; }
.search { flex: 1; height: 27px; }

.combo { position: relative; display: flex; align-items: center; border: 2px solid #a9a9a9; border-top-color: #c9c9c9; border-bottom-color: #858585; border-radius: 7px; background: linear-gradient(#fff, #d9d9d9); overflow: hidden; }
.combo::before { content: ""; position: absolute; right: -2px; top: 0; bottom: 0; width: 26px; background: linear-gradient(#b8261b, #86180f); pointer-events: none; }
.combo::after { content: ""; position: absolute; right: 6px; top: 50%; margin-top: -3px; width: 12px; height: 6px; background: #fff; clip-path: polygon(0 0, 100% 0, 50% 100%); pointer-events: none; }
.combo select { appearance: none; border: 0; outline: 0; background: none; font: inherit; color: inherit; padding: 0 0 0 1px; width: 100%; height: 28px; }
.workspace { width: 216px; height: 38px; margin: 2px 2px 0 5px; background: #fff; }

.work { flex: 1; display: flex; min-height: 0; padding-top: 1px; margin-top: -2px; background: #e6e6e6; }
aside { width: 283px; display: flex; flex-direction: column; border-right: 8px solid #c9cbd1; background: #efefef; }
.navigator { display: flex; flex-direction: column; height: 761px; flex: none; }
.dockhead { height: 32px; flex: none; display: flex; align-items: center; gap: 3px; padding: 0 1px 0 18px; border: 2px solid #6f6f6f; background: linear-gradient(#f3f3f3, #a9a9a9); }
.dockhead h2 { flex: 1; font: bold 21px/28px "Open Sans", sans-serif; color: #101010; white-space: nowrap; }
.dockhead button { width: 20px; height: 22px; border: 1px solid #aaa; border-radius: 6px; background: linear-gradient(#fafafa, #cfcfcf); font: bold 18px/20px "Open Sans", sans-serif; }
.dockhead svg { fill: none; stroke: #111; stroke-width: 2px; }
.cellview { height: 52px; display: flex; flex-direction: column; align-items: center; padding: 5px 5px 0 0; border-bottom: 2px solid #c4c4c4; line-height: 21px; font-size: 15px; }
.cellview b { font-size: 17px; font-weight: 700; }
.tree { margin-top: 2px; }
.tree + .tree { margin-top: 6px; }
.tree h3 { font: bold 21px/28px "Open Sans", sans-serif; padding-left: 19px; position: relative; }
.tree h3::before { content: ""; position: absolute; left: 3px; top: 12px; width: 12px; height: 8px; background: #b4211a; clip-path: polygon(0 0, 100% 0, 50% 100%); }
.tree li { display: flex; justify-content: space-between; padding: 0 33px 0 19px; height: 30px; line-height: 32px; position: relative; }
.tree li::after { content: ""; position: absolute; right: 6px; top: 12px; width: 10px; height: 10px; background: #9c9c9c; clip-path: polygon(0 0, 100% 50%, 0 100%); }
.navigator footer { margin-top: auto; height: 32px; display: flex; align-items: center; gap: 18px; padding: 0 9px 0 8px; }
.navigator footer .cols { margin-left: auto; }
.property { flex: 1; display: flex; flex-direction: column; border-top: 9px solid #d0d2d7; padding-bottom: 6px; }
.pickers { display: flex; gap: 5px; padding: 6px 5px 5px; }
.pickers .combo { height: 37px; }
.schem { width: 140px; padding-left: 3px; }
.attrs { width: 120px; }
.attrs select { padding: 0; }
.sheet { flex: 1; margin: 0 6px 0 5px; background: #fff; border: 2px solid #333; border-width: 2px 0 0 2px; }
table { border-collapse: collapse; width: 100%; table-layout: fixed; background: #e0e0e0; }
th, td { height: 33px; padding: 0; border-bottom: 2px solid #e9e9e9; font-weight: 400; text-align: left; font-size: 20px; line-height: 28px; color: #333; white-space: nowrap; }
th { width: 154px; padding-left: 35px; border-right: 2px solid #e9e9e9; }
td { padding-left: 6px; }
td svg { display: inline-block; vertical-align: -4px; margin-right: 9px; }

.canvas { flex: 1; margin-top: 3px; background: #000; position: relative; min-width: 0; }
.canvas > svg { position: absolute; inset: 0; }
.label { font: 300 32px Inter, "Open Sans", sans-serif; }
.pinname { font-size: 37px; fill: #d22c1e; }
.master { fill: #e3e04a; }
.inst { font-size: 30px; fill: #d22c1e; }
.param { fill: #d67a28; }
.slash { fill: none; stroke-width: 2px; }
.slash.inst { stroke: #d22c1e; }
.slash.param { stroke: #d67a28; }

.mousebar { height: 34px; display: grid; grid-template-columns: 8px 1fr 1fr 1fr; align-items: center; padding: 0 14px 2px 6px; background: linear-gradient(#ececec, #b9b9b9); border-bottom: 2px solid #939393; color: #2a2a2a; }
.mousebar .grip { height: 20px; margin: 0; }
.mousebar span { padding-left: 1px; }
.mousebar span:nth-of-type(2) { text-align: center; }
.mousebar span:nth-of-type(3) { text-align: right; }
.status { height: 38px; display: flex; align-items: center; background: #efefef; border-bottom: 2px solid #666; padding-top: 1px; font-size: 20px; color: #2a2a2a; }
.status .count { align-self: stretch; width: 49px; margin-left: 2px; padding-left: 2px; line-height: 36px; background: #f3dada; border-right: 2px solid #888; }
.cmd { margin: 0 18px 0 auto; border-left: 2px solid #777; padding-left: 10px; line-height: 32px; }
.status i { width: 14px; height: 32px; margin: 0 5px 0 16px; background: #9b9ba0; border: 2px solid #666; border-right-color: #ddd; }

.desktop { height: 74px; background: #1a2231; display: flex; justify-content: center; }
.dock { width: 459px; background: #e8e8e6; border: solid #fafafa; border-width: 2px 2px 0; display: flex; align-items: center; justify-content: center; gap: 20px; padding-right: 2px; }
.dock button { width: 52px; }
.dock i { width: 2px; height: 50px; background: #cfcfcd; margin: 0 -6px; }
.bottom { height: 39px; background: #282828; }

.dialog { position: absolute; z-index: 4; left: 596px; top: 323px; width: 474px; height: 515px; display: flex; flex-direction: column; background: #efefef; border: 2px solid #8c8c8c; border-radius: 8px 8px 0 0; overflow: hidden; }
.dialog header { height: 41px; flex: none; display: flex; align-items: center; background: linear-gradient(#f3f3f1, #e6e6e4); padding-left: 6px; position: relative; }
.dialog h2 { position: absolute; left: 0; width: 404px; text-align: center; font: bold 19px/28px "DejaVu Sans", sans-serif; color: #33393b; }
.ctl { margin-left: auto; width: 111px; height: 39px; align-self: flex-start; display: flex; align-items: center; justify-content: center; gap: 15px; background: linear-gradient(#b9b9b9, #c9c9c9); border-radius: 0 0 0 8px; border-left: 1px solid #999; border-bottom: 1px solid #999; }
.ctl svg { fill: none; stroke: #fff; stroke-width: 3px; }
.ctl .thin { stroke-width: 2px; }
.body { flex: 1; display: flex; flex-direction: column; padding: 11px 5px 4px 10px; margin-right: 3px; overflow: hidden; }
fieldset { border: 2px solid #c6c6c6; border-radius: 8px; width: 448px; min-width: 0; margin: 0 0 12px; padding: 0 0 0 6px; height: 85px; flex: none; }
fieldset.file { height: 175px; padding-top: 3px; margin-bottom: 13px; }
legend { font-weight: 700; line-height: 14px; color: #c0281e; margin-left: 4px; padding: 0 4px; }
.row { display: flex; }
.row label { flex: none; width: 153px; line-height: 36px; }
.row .low { line-height: 28px; padding-top: 8px; height: 35px; }
.row .combo { height: 34px; flex: none; }
.lib { width: 273px; }
.type { width: 308px; }
.app { width: 200px; }
.row input { width: 274px; height: 39px; margin-bottom: 3px; padding: 0 4px; font: inherit; color: #222; border: 2px solid #d8d8d8; border-top-color: #9a9a9a; border-radius: 5px; background: #fff; outline: 0; }
.row input.focused { border-color: #8a8a8a; }
.row input::selection { background: #808080; color: #e6f2ee; }
.off { color: #979797; }
.off select { color: #8f8f8f; opacity: 1; }
.app::before { background: #bdbdbd; }
.always { display: flex; align-items: center; gap: 8px; padding-top: 4px; white-space: nowrap; height: 36px; }
.always input { appearance: none; width: 18px; height: 18px; margin: 0; flex: none; border: 1px solid #bbb; border-bottom-color: #888; border-radius: 2px; background: linear-gradient(#fff, #ddd); }
.pathlabel { padding-left: 10px; line-height: 28px; }
.path { flex: none; width: 445px; height: 38px; margin-left: 4px; padding: 0; font: inherit; color: #2a2a2a; background: #e0e0e0; border: 2px solid #e6e6e6; border-top-color: #9a9a9a; border-radius: 5px; }
.actions { margin-top: auto; display: flex; justify-content: flex-end; gap: 5px; margin-right: -2px; }
.actions button { height: 36px; border: 2px solid #aaa; border-bottom-color: #8a8a8a; border-radius: 16px; background: linear-gradient(#fbfbfb, #c9c9c9); }
.actions .ok { width: 76px; color: #fff; font-weight: 700; background: linear-gradient(#bb261b, #86180f); border-color: #9b2118; }
.actions .cancel { width: 116px; }
.actions .help { width: 97px; }
</style>
